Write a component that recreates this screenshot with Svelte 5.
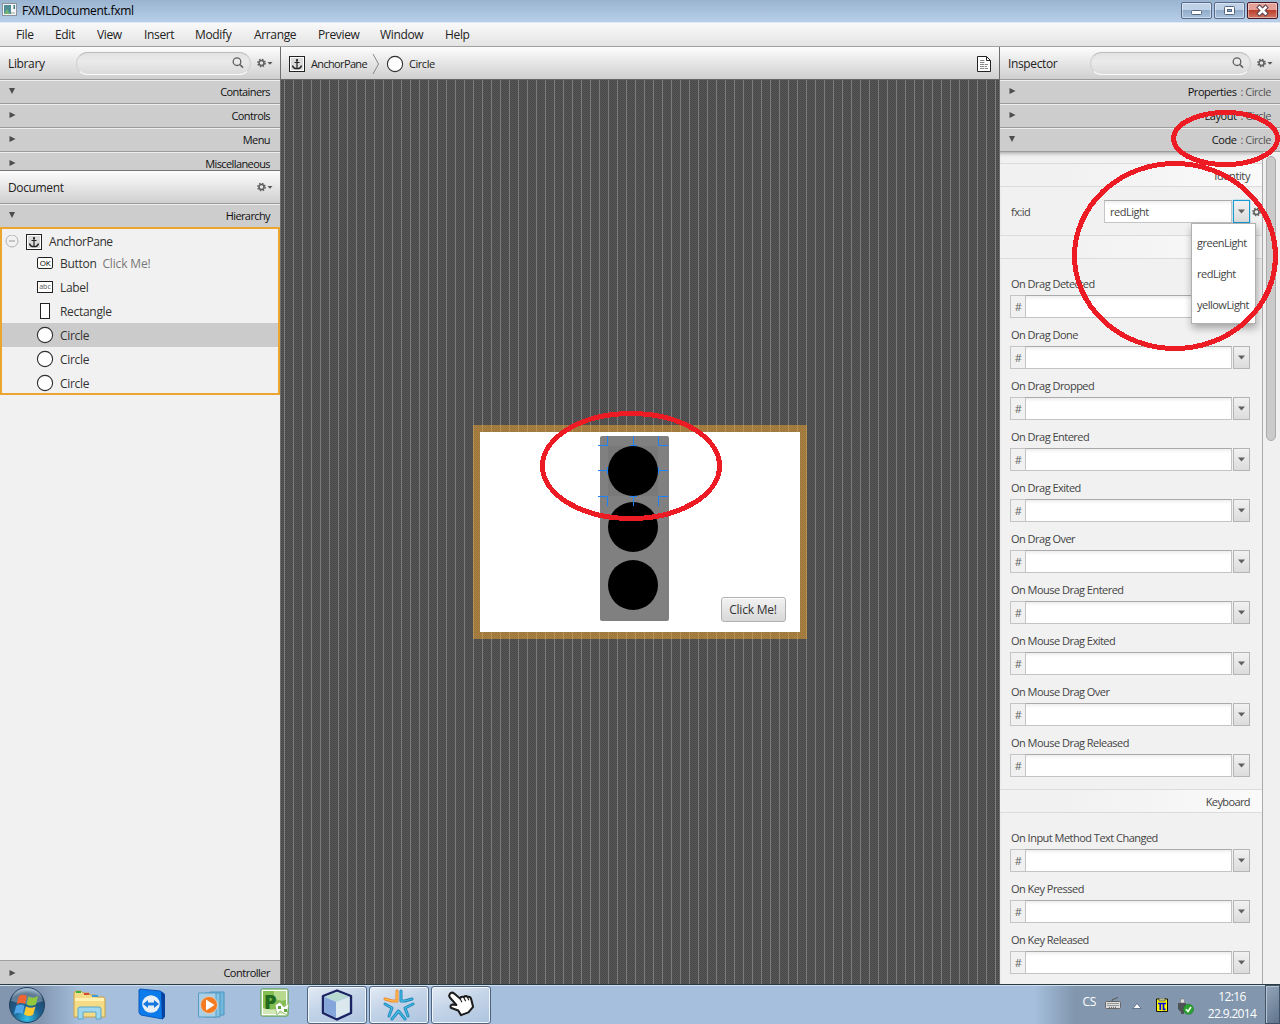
<script>
  const menus = ['File', 'Edit', 'View', 'Insert', 'Modify', 'Arrange', 'Preview', 'Window', 'Help'];
  const library = [
    { name: 'Containers', open: true },
    { name: 'Controls', open: false },
    { name: 'Menu', open: false },
    { name: 'Miscellaneous', open: false }
  ];
  const inspector = [
    { name: 'Properties', open: false },
    { name: 'Layout', open: false },
    { name: 'Code', open: true }
  ];
  const tree = [
    { icon: 'ok', name: 'Button', note: 'Click Me!' },
    { icon: 'abc', name: 'Label' },
    { icon: 'rect', name: 'Rectangle' },
    { icon: 'circle', name: 'Circle', selected: true },
    { icon: 'circle', name: 'Circle' },
    { icon: 'circle', name: 'Circle' }
  ];
  const dragEvents = [
    'On Drag Detected', 'On Drag Done', 'On Drag Dropped', 'On Drag Entered', 'On Drag Exited',
    'On Drag Over', 'On Mouse Drag Entered', 'On Mouse Drag Exited', 'On Mouse Drag Over', 'On Mouse Drag Released'
  ];
  const keyEvents = ['On Input Method Text Changed', 'On Key Pressed', 'On Key Released'];
  const ids = ['greenLight', 'redLight', 'yellowLight'];
</script>

{#snippet arrow(open)}
  <svg class="arrow" width="8" height="8" viewBox="0 0 8 8">
    <path d={open ? 'M1 1H7L4 7Z' : 'M1.5 1L7.5 4L1.5 7Z'} fill="#4c4c4c" />
  </svg>
{/snippet}

{#snippet gear(menu)}
  <svg class="gear" width={menu ? 16 : 9} height="10" viewBox={menu ? '0 0 16 10' : '0 0 9 10'}>
    <circle cx="4.5" cy="5" r="3.6" fill="none" stroke="#606060" stroke-width="1.5" stroke-dasharray="1.5 1.33" />
    <circle cx="4.5" cy="5" r="2.5" fill="none" stroke="#606060" stroke-width="1.5" />
    {#if menu}<path d="M10.5 4H15.5L13 6.8Z" fill="#555" />{/if}
  </svg>
{/snippet}

{#snippet search()}
  <div class="search">
    <svg width="12" height="12" viewBox="0 0 12 12" fill="none" stroke="#606060">
      <circle cx="5" cy="4.7" r="3.8" stroke-width="1.3" /><path d="M7.8 7.5L11 10.7" stroke-width="1.7" />
    </svg>
  </div>
{/snippet}

{#snippet anchorIcon()}
  <svg width="16" height="16" viewBox="0 0 16 16">
    <rect x=".5" y=".5" width="15" height="15" fill="#fff" stroke="#222" />
    <rect x="2" y="2" width="12" height="12" fill="#dcdcdc" />
    <circle cx="8" cy="4" r="1.1" fill="#222" />
    <path d="M8 4V12.500M5.500 6.500H10.500" fill="none" stroke="#222" stroke-width="1.200" />
    <path d="M3.500 9.500C4 12 6 12.600 8 12.600S12 12 12.500 9.500" fill="none" stroke="#222" stroke-width="1.400" />
  </svg>
{/snippet}

{#snippet circleIcon()}
  <svg width="18" height="18" viewBox="0 0 18 18"><circle cx="9" cy="9" r="7.6" fill="#fff" stroke="#303030" stroke-width="1.1" /></svg>
{/snippet}

{#snippet drop(active)}
  <div class="drop" class:active>
    <svg width="7" height="5" viewBox="0 0 7 5"><path d="M0 .5H7L3.500 4.500Z" fill="#606060" /></svg>
  </div>
{/snippet}

{#snippet eventField(name)}
  <div class="event">
    <div class="label">{name}</div>
    <div class="combo"><span class="hash">#</span><span class="input"></span>{@render drop(false)}</div>
  </div>
{/snippet}

<div class="screen">
  <header class="titlebar">
    <svg class="appicon" width="16" height="14" viewBox="0 0 16 14">
      <rect x=".5" y=".5" width="14" height="12" fill="#f4f4f4" stroke="#8b949d" />
      <rect x="2" y="2" width="7" height="9" fill="#4f8e96" /><path d="M2 11L5 6L8 11Z" fill="#74b577" />
      <rect x="11.5" y="2" width="1.5" height="4" fill="#3c7a86" /><rect x="9" y="9" width="4" height="2" fill="#ccc" />
    </svg>
    <span class="title">FXMLDocument.fxml</span>
    <div class="winbtns">
      <span class="wb"><svg width="29" height="15" viewBox="0 0 29 15"><rect x="9.5" y="7.5" width="10" height="4" rx="1" fill="#fff" stroke="#53657e" /></svg></span>
      <span class="wb"><svg width="29" height="15" viewBox="0 0 29 15"><rect x="9.5" y="3.5" width="10" height="8" rx="1" fill="#fff" stroke="#53657e" /><rect x="12.5" y="6.5" width="4" height="2" fill="#86a5ca" stroke="#53657e" /></svg></span>
      <span class="wb close"><svg width="29" height="15" viewBox="0 0 29 15"><path d="M11.500 4.500L17.500 10.500M17.500 4.500L11.500 10.500" stroke="#5b4350" stroke-width="4.600" stroke-linecap="square" /><path d="M11.500 4.500L17.500 10.500M17.500 4.500L11.500 10.500" stroke="#fff" stroke-width="2.600" stroke-linecap="square" /></svg></span>
    </div>
  </header>
  <nav class="menubar">
    {#each menus as m}<span>{m}</span>{/each}
  </nav>

  <main>
    <aside class="left">
      <div class="head"><span class="name">Library</span>{@render search()}{@render gear(true)}</div>
      <div class="library">
        {#each library as s}
          <div class="section">{@render arrow(s.open)}<span>{s.name}</span></div>
        {/each}
      </div>
      <div class="head doc"><span class="name">Document</span>{@render gear(true)}</div>
      <div class="section">{@render arrow(true)}<span>Hierarchy</span></div>
      <div class="tree">
        <div class="node root">
          <svg width="14" height="14" viewBox="0 0 14 14"><circle cx="7" cy="6" r="6" fill="none" stroke="#b0b0b0" /><path d="M4 6H10" stroke="#999" /></svg>
          {@render anchorIcon()}<span>AnchorPane</span>
        </div>
        {#each tree as n}
          <div class="node" class:selected={n.selected}>
            <div class="ico">
              {#if n.icon === 'circle'}{@render circleIcon()}
              {:else if n.icon === 'rect'}
                <svg width="12" height="16" viewBox="0 0 12 16"><rect x="1.5" y=".5" width="9" height="15" fill="#fff" stroke="#222" /></svg>
              {:else}
                <svg width="16" height="12" viewBox="0 0 16 12"><rect x=".5" y=".5" width="15" height="11" rx={n.icon === 'ok' ? 1.5 : 0} fill="#fff" stroke="#222" /><text x="8" y={n.icon === 'ok' ? 9 : 8.4} text-anchor="middle" class={n.icon}>{n.icon === 'ok' ? 'OK' : 'abc'}</text></svg>
              {/if}
            </div>
            <span class="text">{n.name}</span>{#if n.note}<span class="text note">{n.note}</span>{/if}
          </div>
        {/each}
      </div>
      <div class="section controller">{@render arrow(false)}<span>Controller</span></div>
    </aside>

    <section class="center">
      <div class="crumbs">
        {@render anchorIcon()}<span class="c1">AnchorPane</span>
        <svg class="chev" width="8" height="20" viewBox="0 0 8 20"><path d="M1 0L6.5 10L1 20" fill="none" stroke="#888" /></svg>
        {@render circleIcon()}<span class="c2">Circle</span>
        <svg class="page" width="14" height="16" viewBox="0 0 14 16">
          <path d="M.5 .5H9.500L13.500 4.500V15.500H.5Z" fill="#fff" stroke="#222" /><path d="M9.500 .5V4.500H13.500" fill="none" stroke="#222" />
          <path d="M3 4.500H8M3 6.500H8M3 8.500H11M3 10.500H10M3 12.500H11" stroke="#888" stroke-dasharray="4 .6" />
        </svg>
      </div>
      <div class="canvas">
        <div class="pane">
          <svg width="320" height="200" viewBox="480 432 320 200">
            <rect x="600" y="436" width="69" height="185" rx="2" fill="#808080" />
            <rect x="608" y="446" width="50" height="50" fill="#797979" />
            <circle cx="633" cy="471" r="25" /><circle cx="633" cy="527" r="25" /><circle cx="633" cy="585" r="25" />
            <path d="M598 445.5H607.5V436M658.5 436V445.5H668M598 496.5H607.5V506M658.5 506V496.5H668M598 470.5H607.5M607.5 467V474M668 470.5H658.5M658.5 467V474M633.5 436V445.5M630 445.5H637M633.5 506V496.5M630 496.5H637" fill="none" stroke="#1e82ff" />
          </svg>
          <button>Click Me!</button>
        </div>
      </div>
    </section>

    <aside class="right">
      <div class="head"><span class="name">Inspector</span>{@render search()}{@render gear(true)}</div>
      {#each inspector as s}
        <div class="section">{@render arrow(s.open)}<span>{s.name}<i>: Circle</i></span></div>
      {/each}
      <div class="body">
        <div class="form">
          <div class="group first">Identity</div>
          <div class="fxid">
            <span class="label">fx:id</span>
            <div class="idcombo"><span class="input">redLight</span>{@render drop(true)}
              <div class="popup">{#each ids as id}<span>{id}</span>{/each}</div>
            </div>
            {@render gear(false)}
          </div>
          <div class="group"></div>
          <div class="events">{#each dragEvents as e}{@render eventField(e)}{/each}</div>
          <div class="group">Keyboard</div>
          <div class="events">{#each keyEvents as e}{@render eventField(e)}{/each}</div>
        </div>
        <div class="track"><div class="thumb"></div></div>
      </div>
    </aside>
  </main>

  <footer class="taskbar">
    <div class="launch">
      <svg width="40" height="38" viewBox="0 0 40 38">
        <defs><radialGradient id="orb" cx=".5" cy=".9" r=".9"><stop offset="0" stop-color="#2fc0e8" /><stop offset=".45" stop-color="#1d5f8e" /><stop offset=".8" stop-color="#24486b" /><stop offset="1" stop-color="#9fc0d8" /></radialGradient></defs>
        <circle cx="20" cy="19" r="17.500" fill="url(#orb)" stroke="#22405f" />
        <path d="M4 15C6 6 12 2.500 20 2.500S34 6 36 15C28 19 12 18 4 15Z" fill="#fff" opacity=".28" />
        <path d="M12 10Q16 7.500 20 10L18 18Q14 16 9.500 18.500Z" fill="#ee6432" /><path d="M21.500 10.500Q26 13 31 10L29 18.500Q24 21 19.500 18.500Z" fill="#93c83e" />
        <path d="M9 20Q13 17.500 17.500 19.500L15.500 28Q11 26 7 28.500Z" fill="#4fa5e8" /><path d="M19 20.500Q24 23 28.500 20.500L26 29Q21 31 17 28.500Z" fill="#fdc92f" />
      </svg>
      <svg width="34" height="32" viewBox="0 0 34 32">
        <path d="M2 5Q2 2 4 2H9L11 4H17L18 6H24L25 8H31Q33 8 33 10V28H2Z" fill="#f4dc86" stroke="#c6a34c" />
        <path d="M3 9H32V12H3Z" fill="#fff1b4" /><path d="M4 3H9" stroke="#3cae49" stroke-width="2" /><path d="M12 5H17" stroke="#d34b35" stroke-width="2" /><path d="M20 7H26" stroke="#3d9ad8" stroke-width="2" />
        <path d="M6 30V20Q6 18 8 18H27Q29 18 29 20V30H24V23H11V30Z" fill="#9fd8ee" stroke="#5aa6c8" />
      </svg>
      <svg class="viewer" width="28" height="32" viewBox="0 0 28 32">
        <path d="M2 1L22 3Q25 4 25 6V31L3 27Q1 26 1 24V2Z" fill="#0c7bec" stroke="#0a58bc" /><path d="M23 4Q27 5 27 7V29L24 31Z" fill="#0843a0" />
        <circle cx="13" cy="16" r="8.800" fill="#e9f0f5" /><path d="M5 16L10 12V14.500H16V12L21 16L16 20V17.500H10V20Z" fill="#1878e0" />
      </svg>
      <svg width="30" height="28" viewBox="0 0 30 28">
        <path d="M13 1H27V24H13Z" fill="#74b8dc" stroke="#4c96c0" /><path d="M8 2H23V26H8Z" fill="#86c6e4" stroke="#4c96c0" /><path d="M1.500 2H19V26H1.500Z" fill="#a9cfe6" stroke="#5b9cc5" />
        <circle cx="12" cy="14" r="8.500" fill="#f47b20" stroke="#d9d0c8" /><path d="M9 8.500L17.500 14L9 19.500Z" fill="#fff" />
      </svg>
      <svg class="project" width="30" height="30" viewBox="0 0 30 30">
        <rect x="1" y="1" width="27" height="27" rx="1.500" fill="#fff" stroke="#4e9a33" /><rect x="3" y="3" width="23" height="23" fill="#85bd52" />
        <path d="M14 3H26V12Q20 14 14 10Z" fill="#b6d98c" /><path d="M3 20Q14 24 26 17V26H3Z" fill="#d3e8b8" />
        <text x="4" y="21" class="pletter">P</text>
        <path d="M15 17L20 14L24 19L29 15L27 27L20 23L17 27Z" fill="#fff" stroke="#78ae53" stroke-width=".7" /><path d="M18 18H21V21H18ZM24 21H27V24H24Z" fill="#5ea43a" />
      </svg>
    </div>
    <div class="tasks">
      <div class="task"><svg width="32" height="32" viewBox="0 0 32 32"><path d="M16 1.500L30 7V24L16 30.500L2 24V7Z" fill="#b9d3e8" stroke="#1c2363" stroke-width="2.400" stroke-linejoin="round" /><path d="M3.500 8L15 13V29L3.500 23Z" fill="#85a6da" /><path d="M15 13L28.500 8V23L15 29Z" fill="#dbe8ed" /><path d="M4 7.500L16 3L28 7.500L15 12Z" fill="#b7d9cf" /></svg></div>
      <div class="task"><svg width="34" height="34" viewBox="0 0 34 34" fill="none" stroke-width="3" stroke-linecap="round" stroke-linejoin="round">
        <g stroke="#2086b8"><path d="M19 3V13H23L30 11" /><path d="M31 16L23 20L26 28" /><path d="M23 31L16.500 23L10 31" /><path d="M7 28L10 20L3 16" /></g>
        <g stroke="#42b9e5" stroke-width="1.300"><path d="M19 3V13H23L30 11" /><path d="M31 16L23 20L26 28" /><path d="M23 31L16.500 23L10 31" /><path d="M7 28L10 20L3 16" /></g>
        <path d="M15 3V13H10L3 11" stroke="#ef8432" /><path d="M15 3V13H10L3 11" stroke="#ffc94a" stroke-width="1.200" /></svg></div>
      <div class="task"><svg class="hand" width="28" height="26" viewBox="0 0 30 28"><path d="M3 3Q5 .5 8 3L14 8Q15 5.500 18 6.500Q20 4.500 22.500 6.500Q25 5.500 26 9L28 17L23 23L15 26L12 21L4 18Q3 15 6 14.500L10 15L3 7Q1.500 5 3 3Z" fill="#fff" stroke="#1c1c1c" stroke-width="2.200" stroke-linejoin="round" /><path d="M14 8L16 12M18 7L20 11M22 7L23.500 10" stroke="#1c1c1c" stroke-width="1.200" /></svg></div>
    </div>
    <div class="tray">
      <span class="lang">CS</span>
      <svg class="kbd" width="16" height="14" viewBox="0 0 16 14"><rect x=".5" y="5.500" width="15" height="7" rx="1" fill="#ddd" stroke="#666" /><path d="M2.500 7.500H14M2.500 9.500H14M4 11.300H12" stroke="#555" stroke-dasharray="1 1" /><path d="M7 5Q7 3 9 3T13 1" fill="none" stroke="#555" /></svg>
      <svg class="up" width="10" height="8" viewBox="0 0 10 8"><path d="M5 1.500L9.200 6.500H.8Z" fill="#fff" stroke="#53657e" stroke-width=".8" /></svg>
      <svg class="pi" width="12" height="14" viewBox="0 0 12 14"><path d="M.5 1H11.500V13.500H.5Z" fill="#ff0" stroke="#111" /><rect x="3" y="0" width="6" height="3" fill="#b8bd98" stroke="#333" stroke-width=".6" /><path d="M2 5.500H10M4.300 6V12M7.500 6V11.300H9.500" stroke="#0000e8" stroke-width="1.700" fill="none" /></svg>
      <svg class="usb" width="17" height="17" viewBox="0 0 17 17"><rect x="3.500" y="1" width="4" height="4" fill="#ddd" stroke="#777" stroke-width=".6" /><path d="M1 5H9V11L7 14V16H4V14L1 11Z" fill="#4f5358" /><circle cx="11.500" cy="11.300" r="5" fill="#2ba42f" stroke="#167a1c" stroke-width=".6" /><path d="M9 11.300L11 13.500L14 9" fill="none" stroke="#fff" stroke-width="1.500" /></svg>
      <div class="clock"><span>12:16</span><span>22.9.2014</span></div>
      <div class="desk"></div>
    </div>
  </footer>

  <!-- Highlight ellipses drawn over the window -->
  <svg class="marks" width="1280" height="1024" viewBox="0 0 1280 1024" fill="none" stroke="#ed1c24" stroke-width="5" shape-rendering="crispEdges">
    <ellipse cx="1225.500" cy="138.500" rx="52" ry="26" />
    <ellipse cx="1175" cy="256" rx="100.500" ry="92.500" />
    <ellipse cx="631" cy="466" rx="88.500" ry="52.500" />
  </svg>
</div>

<style>
  :global(body) { margin: 0; overflow: hidden; }
  .screen { position: relative; width: 1280px; height: 1024px; display: flex; flex-direction: column; overflow: hidden; font: 12px/16px "Open Sans", "Noto Sans", sans-serif; letter-spacing: -0.3px; color: #222; background: #f1f1f1; }
  .screen * { box-sizing: border-box; white-space: nowrap; }
  svg { flex: none; display: block; }
  .titlebar { flex: none; height: 23px; display: flex; align-items: flex-start; padding: 3px 2px 0; background: linear-gradient(#9ab3cf, #b7cfe8); border-bottom: 1px solid #dfe8f2; color: #000; }
  .title { margin-left: 4px; line-height: 15px; letter-spacing: -0.26px; }
  .winbtns { margin: -1px 0 0 auto; display: flex; gap: 2px; }
  .wb { width: 31px; height: 17px; border: 1px solid #56698a; border-radius: 2px; background: linear-gradient(#bfd1e6 45%, #91acca 50%, #a9c2de); box-shadow: inset 0 0 0 1px #ffffff70; }
  .wb.close { border-color: #471623; background: linear-gradient(#e3a198 45%, #bb3f2c 50%, #d07763); }
  .menubar { flex: none; height: 24px; padding-left: 16px; display: grid; grid-template-columns: 39px 42px 47px 51px 59px 64px 62px 65px 60px; align-items: center; background: linear-gradient(#f9f9f9, #e4e4e4); border-bottom: 1px solid #a0a0a0; letter-spacing: -0.35px; }
  main { flex: none; height: 937px; display: flex; }
  .left { width: 281px; border-right: 1px solid #6e6e6e; display: flex; flex-direction: column; background: #f1f1f1; }
  .right { width: 281px; border-left: 1px solid #6e6e6e; display: flex; flex-direction: column; }
  .head { flex: none; height: 33px; display: flex; align-items: center; padding: 0 7px 0 8px; background: linear-gradient(#fdfdfd, #cfcfcf); border-bottom: 1px solid #9a9a9a; letter-spacing: -0.36px; }
  .name { padding-top: 1px; }
  .head .gear { margin-left: 6px; }
  .search { width: 175px; height: 23px; margin-left: auto; border: 1px solid #c9c9c9; border-color: #bdbdbd #d0d0d0 #f8f8f8; border-radius: 12px; display: flex; align-items: center; justify-content: flex-end; padding-right: 6px; background: linear-gradient(#e2e2e2, #eaeaea 40%, #dadada); }
  .right .search { width: 161px; }
  .doc { border-top: 1px solid #777; height: 34px; }
  .doc .gear { margin-left: auto; }
  .section { flex: none; height: 24px; display: flex; align-items: center; padding: 0 10px 0 8px; background: #cdcdcd; border-top: 1px solid #eee; border-bottom: 1px solid #9c9c9c; font-size: 11px; letter-spacing: -0.6px; color: #111; }
  .section .arrow { position: relative; top: -1px; }
  .section span { margin-left: auto; padding-bottom: 1px; }
  .right .section { padding-right: 9px; letter-spacing: -0.45px; }
  .section i { font-style: normal; color: #555; margin-left: 4px; }
  .library { flex: none; height: 90px; overflow: hidden; }
  .tree { flex: none; height: 168px; margin-top: -1px; border: 2px solid #eca52e; display: flex; flex-direction: column; color: #333; }
  .node { height: 24px; flex: none; display: flex; align-items: center; padding-left: 34px; }
  .node .text { padding-top: 2px; }
  .node.root { height: 22px; padding: 3px 0 0 3px; gap: 7px; letter-spacing: -0.45px; }
  .node.selected { background: #cbcbcb; }
  .ico { width: 18px; display: flex; justify-content: center; margin-right: 6px; }
  .note { margin-left: 6px; color: #777; letter-spacing: -0.15px; }
  .ok { font-size: 8px; letter-spacing: -0.2px; }
  .abc { font-size: 7px; fill: #555; letter-spacing: 0; }
  .controller { margin-top: auto; border-top-color: #a0a0a0; border-bottom: 0; letter-spacing: -0.5px; }
  .controller .arrow { top: 0; }
  .controller span { padding: 1px 0 0; }
  .center { width: 718px; display: flex; flex-direction: column; }
  .crumbs { flex: none; height: 33px; display: flex; align-items: center; padding: 2px 8px 0; background: linear-gradient(#fdfdfd, #cfcfcf); border-bottom: 1px solid #666; font-size: 11px; letter-spacing: -0.65px; }
  .c1 { margin-left: 6px; width: 56px; }
  .chev { margin: 0 6px 0 5px; }
  .c2 { margin-left: 5px; letter-spacing: -0.45px; }
  .page { margin-left: auto; }
  .canvas { flex: 1; display: flex; justify-content: center; align-items: flex-start; padding-top: 345px; background: repeating-linear-gradient(90deg, transparent 0 3px, #7c7c7c 3px 4px, transparent 4px 9px), repeating-conic-gradient(#474747 0 25%, #585858 0 50%) 0 0 / 2px 2px; }
  .pane { position: relative; width: 334px; height: 214px; border: 7px solid rgba(236, 165, 46, 0.52); background: #fff; background-clip: padding-box; }
  .pane button { position: absolute; left: 241px; top: 165px; width: 65px; height: 25px; padding: 0 1px 0 0; border: 1px solid #b0b0b0; border-radius: 3px; background: linear-gradient(#f2f2f2, #d8d8d8); box-shadow: inset 0 1px #fff; font: inherit; letter-spacing: -0.2px; color: #333; }
  .body { flex: 1; min-height: 0; display: flex; box-shadow: inset 0 4px 4px -3px #999; font-size: 11px; color: #444; letter-spacing: -0.52px; }
  .form { width: 263px; border-right: 1px solid #aaa; overflow: hidden; }
  .group { height: 24px; border: solid #dcdcdc; border-width: 1px 0; background: linear-gradient(90deg, #f1f1f1 25%, #fafafa); text-align: right; padding: 3px 12px 0 0; line-height: 18px; letter-spacing: -0.6px; }
  .group.first { margin-top: 11px; letter-spacing: -0.4px; }
  .fxid { height: 48px; display: flex; align-items: center; padding-left: 11px; }
  .fxid > .label { width: 93px; padding-top: 2px; }
  .idcombo { position: relative; display: flex; width: 146px; letter-spacing: -0.5px; }
  .fxid .gear { margin: 1px 0 0 2px; }
  .input { flex: 1; height: 23px; border: 1px solid #c4c4c4; border-top-color: #aaa; background: linear-gradient(#eee, #fff 4px); padding-left: 5px; line-height: 22px; }
  .drop { width: 17px; height: 23px; margin-left: 1px; border: 1px solid #b5b5b5; background: linear-gradient(#f1f1f1, #dcdcdc); display: flex; align-items: center; justify-content: center; }
  .drop.active { border-color: #169ad2; box-shadow: 0 0 1px #169ad2; }
  .popup { position: absolute; left: 87px; top: 23px; z-index: 2; width: 65px; height: 101px; padding: 3px 0 0 5px; border: 1px solid #b0b0b0; background: #fff; box-shadow: 1px 4px 8px #0005; display: flex; flex-direction: column; }
  .popup span { height: 31px; line-height: 31px; }
  .events { padding: 16px 12px 12px 10px; display: flex; flex-direction: column; gap: 8px; }
  .event .label { height: 20px; line-height: 18px; padding-left: 1px; }
  .combo { display: flex; }
  .hash { width: 16px; margin-right: -1px; height: 23px; border: 1px solid #c4c4c4; text-align: center; line-height: 22px; color: #666; font-size: 11px; }
  .track { flex: 1; padding: 4px 0 0 3px; background: #f0f0f0; }
  .thumb { width: 10px; height: 285px; border-radius: 5px; border: 1px solid #aaa; background: #cacaca; }
  .taskbar { flex: none; height: 40px; display: flex; border-top: 1px solid #2c3c44; box-shadow: inset 0 1px #cfdfee; background: linear-gradient(90deg, #8296b0 0 40px, #a5bfdd 80px 1034px, #8296ae 1075px); }
  .launch { width: 307px; display: grid; grid-template-columns: 58px 62px 62px 60px 62px; align-items: center; justify-items: center; }
  .launch svg:first-child { margin-right: 5px; }
  .launch .viewer { margin: 0 0 2px 2px; }
  .launch .project { margin: 0 0 3px 3px; }
  .pletter { font: 800 20px "Open Sans", sans-serif; fill: #236b20; }
  .tasks { display: flex; gap: 2px; padding-top: 1px; }
  .task { width: 60px; height: 38px; border: 1px solid #4e6480; border-radius: 3px; box-shadow: inset 0 0 0 1px #eef5fb; background: linear-gradient(160deg, #e3ebf5, #c4d4e8 45%, #adc4df); display: flex; align-items: center; justify-content: center; }
  .hand { margin-bottom: 2px; }
  .tray { margin-left: auto; display: flex; align-items: center; color: #fff; }
  .lang { margin: -5px 9px 0 0; }
  .kbd { margin-bottom: 4px; }
  .up { margin: 2px 0 0 11px; }
  .pi { margin: 1px 0 0 14px; }
  .usb { margin: 3px 0 0 9px; }
  .clock { width: 71px; padding-left: 5px; margin-top: 1px; display: flex; flex-direction: column; align-items: center; line-height: 17px; letter-spacing: -0.65px; }
  .desk { width: 15px; align-self: stretch; border: 1px solid #3f5266; box-shadow: inset 1px 1px #b7c4d2; background: linear-gradient(135deg, #93a5ba, #5f748c); }
  .marks { position: absolute; inset: 0; z-index: 5; pointer-events: none; }
</style>
